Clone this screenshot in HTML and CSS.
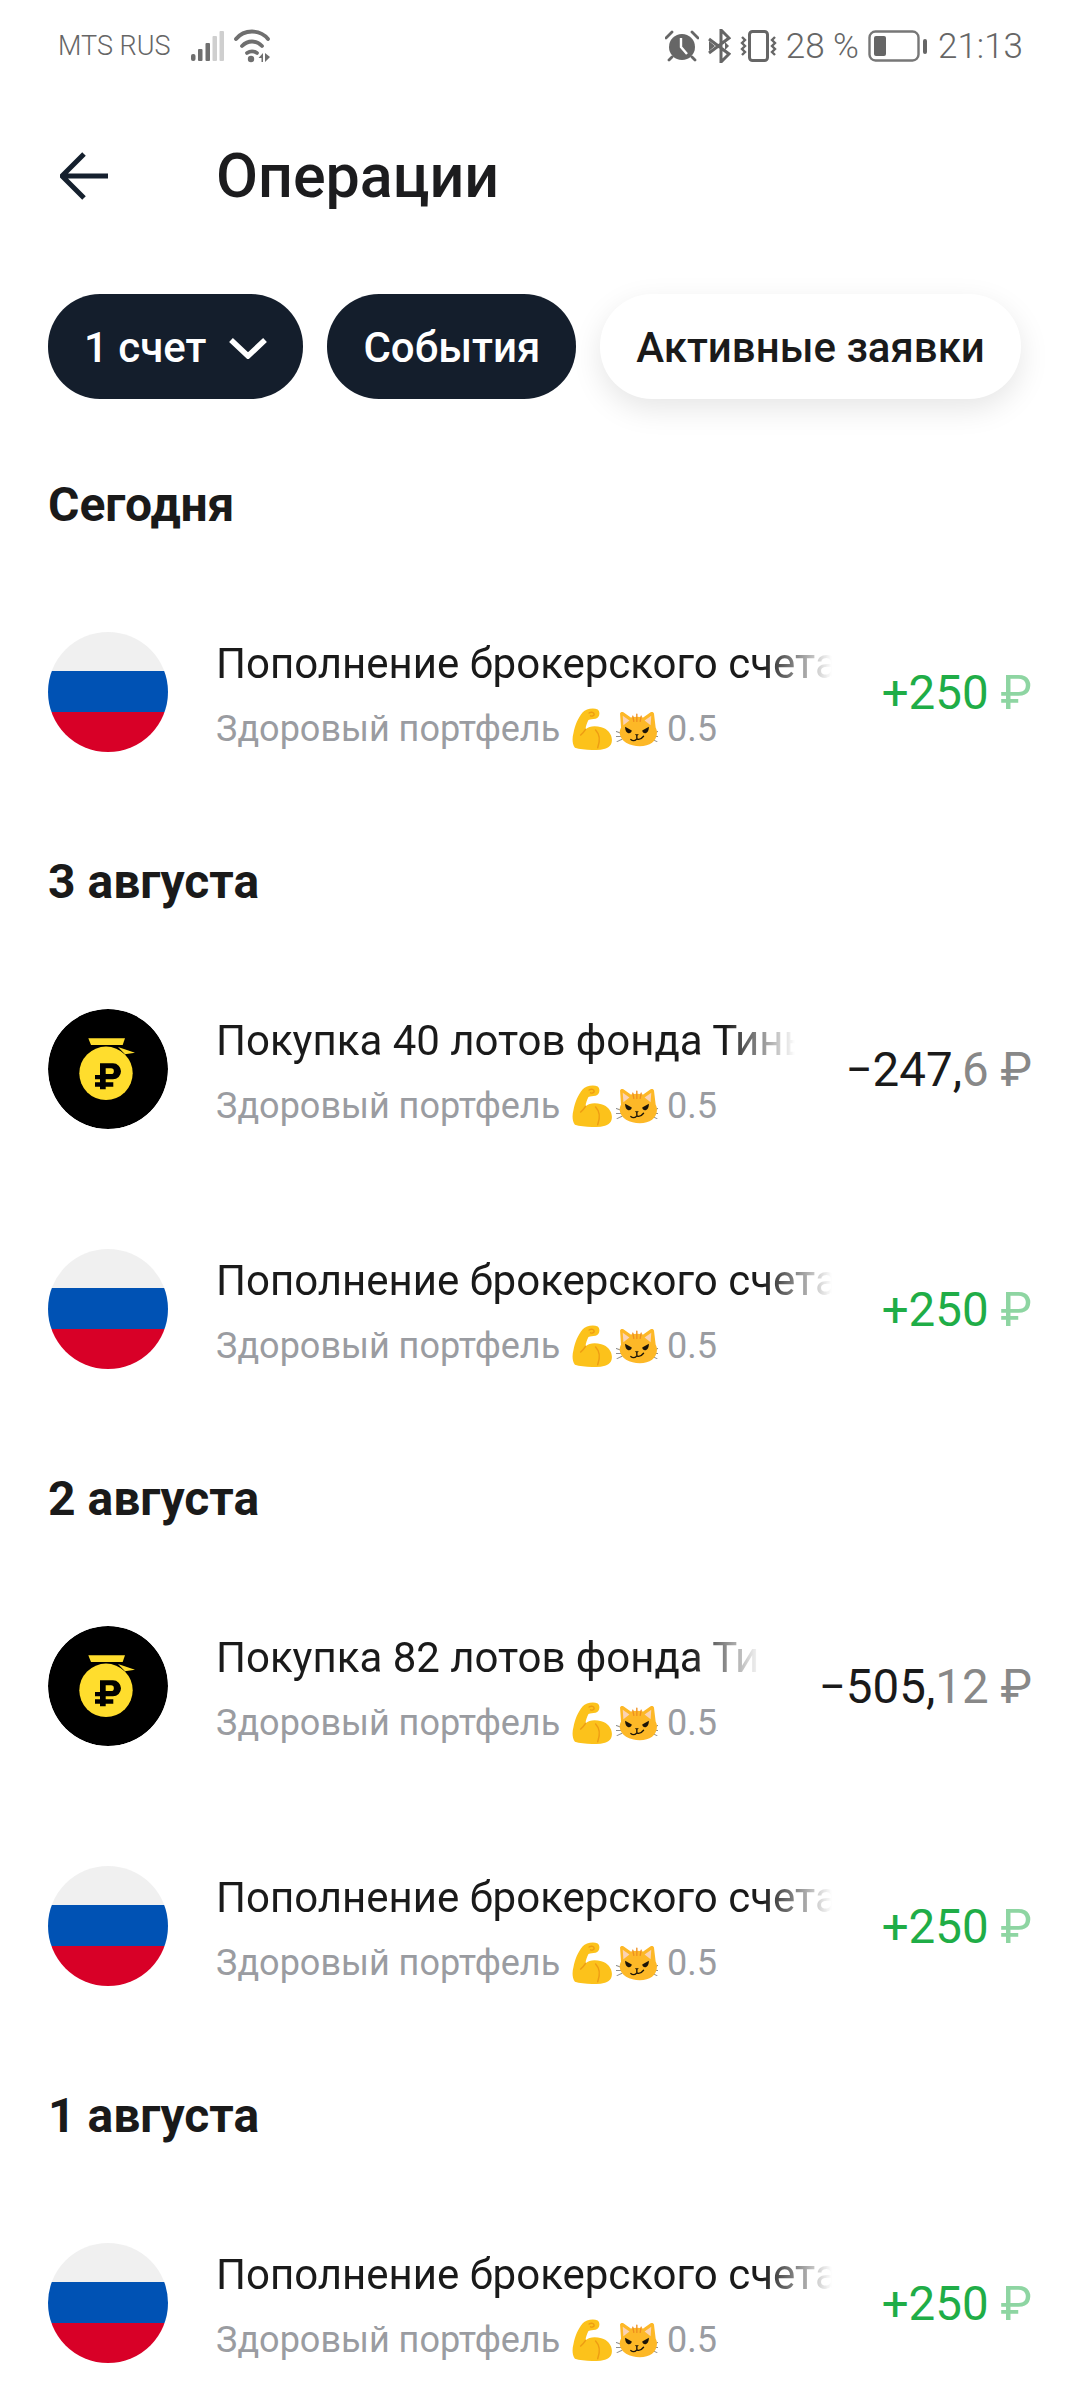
FILE: index.html
```html
<!DOCTYPE html>
<html lang="ru">

<head>
  <meta charset="UTF-8">
  <meta name="viewport" content="width=device-width, initial-scale=1">
  <title>Операции</title>
  <link rel="stylesheet" href="styles.css">
</head>

<body>
  <svg class="defs" width="0" height="0" aria-hidden="true">
    <symbol id="muscle" viewBox="0 0 112 118">
      <path fill="#fcc21b" d="M8 112C0 100 0 85 4 70 8 50 16 28 30 12 38 2 60-2 72 4c8 6 6 24-6 26-8 2-14 0-20 4-4 8-8 18-8 26 10-10 28-10 44-6 18 4 30 20 30 36 0 18-14 26-32 27-25 2-55 1-72-5z" />
      <path fill="none" stroke="#ee9c13" stroke-width="4" stroke-linecap="round" d="M48 14c6-4 14-2 14 4 0 4-6 6-10 4M38 60c-4 6-8 12-14 16M66 62c10 10 14 28 6 50" />
    </symbol>
    <symbol id="cat" viewBox="0 0 125 105">
      <path fill="none" stroke="#8f8f8f" stroke-width="3" stroke-linecap="round" d="M1 60l16 6M0 75h16M3 90l15-7M124 60l-16 6M125 75h-16M122 90l-15-7" />
      <path fill="#fdb827" d="M12 6c1-4 6-6 10-3l22 15c11-3 26-3 37 0l22-15c4-3 9-1 10 3l5 42c3 6 4 11 4 15 0 26-22 41-51 41S11 89 11 63c0-4 1-9 4-15z" />
      <path fill="#fbd3b4" d="M20 13l20 14-18 14zM105 13L85 27l18 14z" />
      <path fill="none" stroke="#ef8f1f" stroke-width="4" stroke-linecap="round" d="M62 8v22M50 14l3 16M75 14l-3 16" />
      <path fill="#1c1408" d="M27 46l20 11c-1 6-5 9-10 8-6-1-10-8-10-19zM98 46L78 57c1 6 5 9 10 8 6-1 10-8 10-19zM56 68h12l-6 6z" />
      <path fill="none" stroke="#1c1408" stroke-width="4" stroke-linecap="round" d="M62 74v6M44 84c6 5 13 3 18-2 6 3 13 1 20-8" />
    </symbol>
  </svg>

  <div class="status-bar">
    <div class="status-side">
      <span class="carrier">MTS RUS</span>
      <svg width="33" height="30" viewBox="0 0 33 30">
        <rect x="0" y="23" width="4.5" height="7" rx="2" fill="#6f6f6f" />
        <rect x="7" y="18" width="4.5" height="12" rx="1" fill="#6f6f6f" />
        <rect x="14.5" y="12" width="4.5" height="18" rx="1" fill="#6f6f6f" />
        <rect x="21.5" y="5" width="4.5" height="25" rx="1" fill="#cfcfcf" />
        <rect x="28.5" y="0" width="4.5" height="30" rx="1" fill="#cfcfcf" />
      </svg>
      <svg class="ic-wifi" width="37" height="34" viewBox="0 0 37 34">
        <g fill="none" stroke="#6f6f6f" stroke-width="3.8" stroke-linecap="round">
          <path d="M2 10C10 0 26 0 34 10" />
          <path d="M8 17c6-6 14-6 20 0" />
          <path d="M13 24c3-2 7-2 10 0" />
        </g>
        <circle cx="17" cy="30" r="3.2" fill="#6f6f6f" />
        <path fill="#6f6f6f" d="M29 24v9h-1.500v-4h-3zM31 24v9l5-5z" />
      </svg>
    </div>
    <div class="status-side status-right">
      <svg width="34" height="32" viewBox="0 0 34 32">
        <circle cx="17" cy="17" r="13" fill="#666" />
        <path d="M16 8v9l6 7" fill="none" stroke="#fff" stroke-width="2.400" />
        <path d="M1 8l6-6M33 8l-6-6M7 27l-3 3M27 27l3 3" stroke="#666" stroke-width="2.800" stroke-linecap="round" />
      </svg>
      <svg width="23" height="34" viewBox="0 0 23 34">
        <path d="M1 10l20 15-8 8V1l8 8L1 24" fill="none" stroke="#666" stroke-width="3" />
        <path d="M1 12l6 5-6 5z" fill="#666" />
        <path d="M17 13l4 4-4 4z" fill="#666" />
      </svg>
      <svg width="37" height="32" viewBox="0 0 37 32">
        <rect x="9.500" y="1.500" width="18" height="29" rx="3" fill="none" stroke="#666" stroke-width="3" />
        <path d="M2 7l3 3-3 3 3 3-3 3 3 3-3 3M35 7l-3 3 3 3-3 3 3 3-3 3 3 3" fill="none" stroke="#666" stroke-width="2.400" />
      </svg>
      <span class="status-text">28 %</span>
      <svg width="59" height="32" viewBox="0 0 59 32">
        <rect x="1.500" y="1.500" width="49" height="29" rx="6" fill="none" stroke="#777" stroke-width="2.400" />
        <rect x="6" y="6" width="12" height="20" rx="2" fill="#666" />
        <rect x="55" y="9" width="4" height="15" rx="2" fill="#666" />
      </svg>
      <span class="status-text time">21:13</span>
    </div>
  </div>

  <header class="top-bar">
    <svg class="back" width="48" height="48" viewBox="0 0 48 48">
      <path d="M24 2L2 24l22 22M2 24h46" fill="none" stroke="#15202e" stroke-width="5" />
    </svg>
    <h1>Операции</h1>
  </header>

  <div class="chips">
    <div class="chip dark">1 счет
      <svg width="38" height="22" viewBox="0 0 38 22">
        <path d="M2 3l17 16L36 3" fill="none" stroke="#fff" stroke-width="5.500" />
      </svg>
    </div>
    <div class="chip dark">События</div>
    <div class="chip light">Активные заявки</div>
  </div>

  <main>
    <h2>Сегодня</h2>
    <div class="row">
      <div class="avatar flag"></div>
      <div class="info">
        <div class="name">Пополнение брокерского счета</div>
        <div class="sub">Здоровый портфель <svg class="muscle"><use href="#muscle" /></svg><svg class="cat"><use href="#cat" /></svg> 0.5</div>
      </div>
      <div class="amount plus">+250 <span class="cur">₽</span></div>
    </div>

    <h2>3 августа</h2>
    <div class="row">
      <svg class="avatar" viewBox="0 0 120 120">
        <circle cx="60" cy="60" r="60" fill="#000" />
        <path fill="#ffdd2d" d="M40.300 29.300H77L74.700 36H43z" />
        <circle cx="58" cy="64.300" r="26.700" fill="#ffdd2d" />
        <path fill="#ffdd2d" d="M70 38l17 5.700-10 1.500z" />
        <path fill="#000" fill-rule="evenodd" d="M52 54.300h13a8 8 0 0 1 0 16h-7.300v3h7.600v4.400h-7.600v2.600H52v-2.600h-5v-4.400h5v-3h-5V66h5zM57.700 59.300V65H63a2.850 2.850 0 0 0 0-5.700z" />
      </svg>
      <div class="info">
        <div class="name">Покупка 40 лотов фонда Тинькофф</div>
        <div class="sub">Здоровый портфель <svg class="muscle"><use href="#muscle" /></svg><svg class="cat"><use href="#cat" /></svg> 0.5</div>
      </div>
      <div class="amount">−247,<span class="frac">6 ₽</span></div>
    </div>
    <div class="row">
      <div class="avatar flag"></div>
      <div class="info">
        <div class="name">Пополнение брокерского счета</div>
        <div class="sub">Здоровый портфель <svg class="muscle"><use href="#muscle" /></svg><svg class="cat"><use href="#cat" /></svg> 0.5</div>
      </div>
      <div class="amount plus">+250 <span class="cur">₽</span></div>
    </div>

    <h2>2 августа</h2>
    <div class="row">
      <svg class="avatar" viewBox="0 0 120 120">
        <circle cx="60" cy="60" r="60" fill="#000" />
        <path fill="#ffdd2d" d="M40.300 29.300H77L74.700 36H43z" />
        <circle cx="58" cy="64.300" r="26.700" fill="#ffdd2d" />
        <path fill="#ffdd2d" d="M70 38l17 5.700-10 1.500z" />
        <path fill="#000" fill-rule="evenodd" d="M52 54.300h13a8 8 0 0 1 0 16h-7.300v3h7.600v4.400h-7.600v2.600H52v-2.600h-5v-4.400h5v-3h-5V66h5zM57.700 59.300V65H63a2.850 2.850 0 0 0 0-5.700z" />
      </svg>
      <div class="info">
        <div class="name">Покупка 82 лотов фонда Тинькофф</div>
        <div class="sub">Здоровый портфель <svg class="muscle"><use href="#muscle" /></svg><svg class="cat"><use href="#cat" /></svg> 0.5</div>
      </div>
      <div class="amount wide">−505,<span class="frac">12 ₽</span></div>
    </div>
    <div class="row">
      <div class="avatar flag"></div>
      <div class="info">
        <div class="name">Пополнение брокерского счета</div>
        <div class="sub">Здоровый портфель <svg class="muscle"><use href="#muscle" /></svg><svg class="cat"><use href="#cat" /></svg> 0.5</div>
      </div>
      <div class="amount plus">+250 <span class="cur">₽</span></div>
    </div>

    <h2>1 августа</h2>
    <div class="row">
      <div class="avatar flag"></div>
      <div class="info">
        <div class="name">Пополнение брокерского счета</div>
        <div class="sub">Здоровый портфель <svg class="muscle"><use href="#muscle" /></svg><svg class="cat"><use href="#cat" /></svg> 0.5</div>
      </div>
      <div class="amount plus">+250 <span class="cur">₽</span></div>
    </div>
  </main>
</body>

</html>
```
FILE: styles.css
```css
* {
  box-sizing: border-box;
}

html,
body {
  height: 2400px;
  overflow: hidden;
}

body {
  margin: 0;
  font-family: Roboto, 'Liberation Sans', sans-serif;
  background-color: #fff;
  color: #1a1a1a;
}

.defs {
  display: block;
  height: 0;
}

.status-bar {
  display: flex;
  justify-content: space-between;
  align-items: center;
  height: 92px;
  padding: 0 57px 0 58px;
  color: #666;
}

.status-side {
  display: flex;
  align-items: center;
}

.carrier {
  font-size: 27px;
  font-weight: 300;
  margin-right: 21px;
}

.ic-wifi {
  margin-left: 10px;
}

.status-right {
  gap: 9px;
}

.status-text {
  font-size: 35px;
  font-weight: 300;
}

.time {
  margin-left: 2px;
}

.top-bar {
  display: flex;
  align-items: center;
  height: 168px;
  padding-left: 60px;
}

.top-bar h1 {
  margin: 0 0 0 108px;
  font-size: 61px;
  font-weight: 500;
  color: #1c1c1e;
}

.chips {
  display: flex;
  gap: 24px;
  margin-top: 34px;
  padding-left: 48px;
}

.chip {
  display: flex;
  align-items: center;
  gap: 23px;
  height: 105px;
  padding: 2px 36px 0;
  border-radius: 52px;
  font-size: 42px;
  font-weight: 500;
}

.chip.dark {
  background-color: #141e2c;
  color: #fff;
}

.chip.light {
  background-color: #fff;
  color: #1a1a1a;
  box-shadow: 0 10px 30px rgba(0, 0, 0, 0.1);
}

main {
  margin-top: 36px;
}

h2 {
  margin: 0;
  height: 137px;
  padding: 45px 48px 0;
  font-size: 48px;
  line-height: 50px;
  font-weight: 700;
  color: #1a1a1a;
}

.row {
  display: flex;
  align-items: center;
  height: 240px;
  padding: 0 48px;
}

.avatar {
  flex: none;
  width: 120px;
  height: 120px;
  border-radius: 50%;
  margin-right: 48px;
}

.flag {
  background: linear-gradient(#f0f0f0 0 39px, #0052b4 39px 80px, #d80027 80px);
}

.info {
  flex: 1;
  min-width: 0;
  overflow: hidden;
  padding-top: 8px;
}

.name {
  font-size: 42px;
  line-height: 50px;
  white-space: nowrap;
  overflow: hidden;
  -webkit-mask-image: linear-gradient(to left, transparent, #000 70px);
  mask-image: linear-gradient(to left, transparent, #000 70px);
}

.sub {
  display: flex;
  align-items: center;
  margin-top: 15px;
  height: 50px;
  font-size: 36px;
  color: #9a9ca1;
  white-space: pre;
}

.muscle {
  flex: none;
  width: 40px;
  height: 42px;
  margin-left: 3px;
}

.cat {
  flex: none;
  width: 42px;
  height: 36px;
  margin-left: 4px;
}

.amount {
  flex: none;
  margin-left: 50px;
  padding-top: 2px;
  font-size: 47.5px;
  color: #1a1a1a;
  white-space: pre;
}

.amount.wide {
  margin-left: 58px;
}

.amount.plus {
  color: #1fad47;
}

.cur {
  opacity: 0.5;
}

.frac {
  color: #888;
}
```
